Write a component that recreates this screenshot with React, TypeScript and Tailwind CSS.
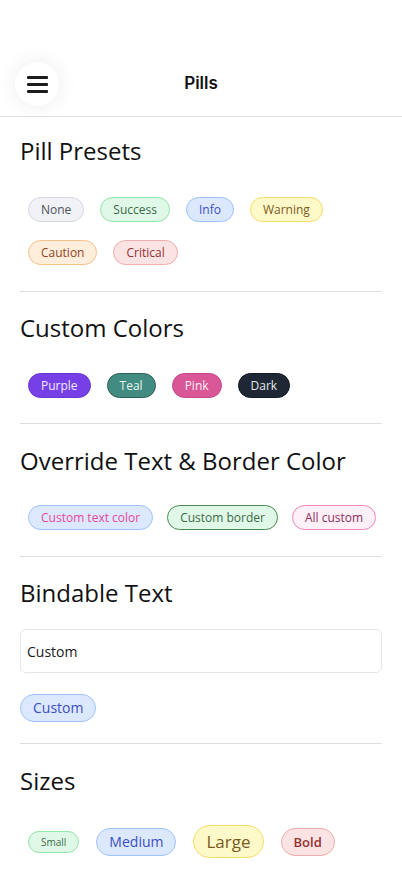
const pillBase =
  "inline-flex items-center rounded-full border px-3 whitespace-nowrap";

type PillProps = {
  label: string;
  className: string;
};

const Pill = ({ label, className }: PillProps) => {
  return <span className={`${pillBase} ${className}`}>{label}</span>;
};

const sm = "py-[3px] text-[12px] leading-[17px]";

const presets = [
  { label: "None", className: `${sm} bg-[#f1f2f5] border-[#d6d8de] text-[#4b505c]` },
  { label: "Success", className: `${sm} bg-[#e0f8e7] border-[#93e6ab] text-[#3b6b48]` },
  { label: "Info", className: `${sm} bg-[#dce8fe] border-[#9ec3fb] text-[#3a4fc4]` },
  { label: "Warning", className: `${sm} bg-[#fef9c8] border-[#f8dd6a] text-[#7b5a22]` },
  { label: "Caution", className: `${sm} bg-[#feeedb] border-[#f7c28a] text-[#934322]` },
  { label: "Critical", className: `${sm} bg-[#fbe3e3] border-[#f2abab] text-[#943030]` },
];

const customColors = [
  { label: "Purple", className: `${sm} bg-[#7640e6] border-[#6a36d2] text-[#f1eaff]` },
  { label: "Teal", className: `${sm} bg-[#428b80] border-[#2f5f57] text-[#e8f5f2]` },
  { label: "Pink", className: `${sm} bg-[#da5797] border-[#c6468a] text-[#fdeef5]` },
  { label: "Dark", className: `${sm} bg-[#1f2734] border-[#121822] text-[#e4e7ec]` },
];

const overrides = [
  { label: "Custom text color", className: `${sm} bg-[#dce8fe] border-[#9ec3fb] text-[#e9479a]` },
  { label: "Custom border", className: `${sm} bg-[#e0f8e7] border-[#4b8a52] text-[#3b6b48]` },
  { label: "All custom", className: `${sm} bg-[#fdf0f6] border-[#ef86bd] text-[#8e2d5c]` },
];

const Heading = ({ children, className }: { children: string; className: string }) => (
  <h2 className={`text-[24px] leading-[33px] font-normal text-[#111111] ${className}`}>
    {children}
  </h2>
);

const Divider = () => <div className="h-px bg-[#dedede]" />;

export default function App() {
  return (
    <div
      className="min-h-screen bg-white"
      style={{ fontFamily: '"Open Sans", "Noto Sans", sans-serif' }}
    >
      {/* Header */}
      <div className="border-b border-[#e2e2e2] pt-[52px]">
        <div className="relative flex h-16 items-center justify-center">
          <button className="absolute left-[15px] top-[10px] flex h-11 w-11 flex-col items-center justify-center gap-[4px] rounded-full bg-white shadow-[0_0_22px_rgba(0,0,0,0.08)]">
            <span className="block h-[3px] w-[21px] rounded-[1px] bg-[#1c1c1c]" />
            <span className="block h-[3px] w-[21px] rounded-[1px] bg-[#1c1c1c]" />
            <span className="block h-[3px] w-[21px] rounded-[1px] bg-[#1c1c1c]" />
          </button>
          <h1
            className="text-[17px] font-semibold text-[#111111]"
            style={{ fontFamily: "Inter, sans-serif" }}
          >
            Pills
          </h1>
        </div>
      </div>

      <div className="px-5">
        {/* Pill Presets */}
        <section className="pt-[17px] pb-[26px]">
          <Heading className="mb-[30px]">Pill Presets</Heading>
          <div className="flex flex-wrap gap-x-4 gap-y-[18px] pl-2">
            {presets.map((p) => (
              <Pill key={p.label} {...p} />
            ))}
          </div>
        </section>
        <Divider />

        {/* Custom Colors */}
        <section className="pt-[19px] pb-[25px]">
          <Heading className="mb-[29px]">Custom Colors</Heading>
          <div className="flex flex-wrap gap-x-4 gap-y-[18px] pl-2">
            {customColors.map((p) => (
              <Pill key={p.label} {...p} />
            ))}
          </div>
        </section>
        <Divider />

        {/* Override */}
        <section className="pt-5 pb-[26px]">
          <Heading className="mb-[28px]">Override Text &amp; Border Color</Heading>
          <div className="flex flex-wrap gap-x-[14px] gap-y-[18px] pl-2">
            {overrides.map((p) => (
              <Pill key={p.label} {...p} />
            ))}
          </div>
        </section>
        <Divider />

        {/* Bindable Text */}
        <section className="pt-[19px] pb-[21px]">
          <Heading className="mb-5">Bindable Text</Heading>
          <input
            readOnly
            value="Custom"
            className="mb-[21px] block h-11 w-full rounded-md border border-[#e6e6e6] bg-white px-[6px] text-[14px] text-[#1a1a1a] outline-none"
          />
          <Pill
            label="Custom"
            className="py-1 text-[14px] leading-[18px] bg-[#dce8fe] border-[#9ec3fb] text-[#3a4fc4]"
          />
        </section>
        <Divider />

        {/* Sizes */}
        <section className="pt-5 pb-6">
          <Heading className="mb-[28px]">Sizes</Heading>
          <div className="flex flex-wrap items-center gap-x-[17px] pl-2">
            <Pill
              label="Small"
              className="py-[3px] text-[10px] leading-[14px] bg-[#e0f8e7] border-[#93e6ab] text-[#3b6b48]"
            />
            <Pill
              label="Medium"
              className="py-1 text-[14px] leading-[18px] bg-[#dce8fe] border-[#9ec3fb] text-[#3a4fc4]"
            />
            <Pill
              label="Large"
              className="py-1 text-[17px] leading-[23px] bg-[#fef9c8] border-[#f8dd6a] text-[#7b5a22]"
            />
            <Pill
              label="Bold"
              className="py-1 text-[13px] leading-[18px] font-semibold bg-[#fbe3e3] border-[#f2abab] text-[#943030]"
            />
          </div>
        </section>
      </div>
    </div>
  );
}
